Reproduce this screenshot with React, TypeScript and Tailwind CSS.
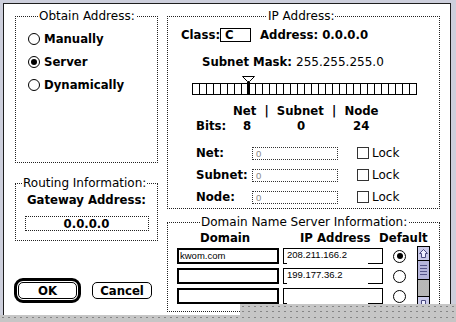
import React from "react";

const chicago = "font-['DejaVu_Sans_Condensed','DejaVu_Sans',sans-serif] font-bold text-[13px] leading-[14px] text-black";
const geneva = "font-['DejaVu_Sans',sans-serif] text-[12px] leading-[14px] text-black";
const small = "font-['Liberation_Sans',Arial,sans-serif] text-[9.5px] leading-[12px]";

const pattern =
  "bg-[#c6c6c6] bg-[radial-gradient(circle,#858585_0.9px,transparent_1.1px)] bg-[size:6px_5px]";

function GroupBox({
  label,
  labelClass,
  className,
  children,
}: {
  label: string;
  labelClass: string;
  className: string;
  children: React.ReactNode;
}) {
  return (
    <div className={`relative border border-dotted border-[#222] ${className}`}>
      <span className={`absolute -top-[8px] bg-white px-[1px] whitespace-nowrap ${geneva} ${labelClass}`}>
        {label}
      </span>
      {children}
    </div>
  );
}

function Radio({ on, size = 12 }: { on?: boolean; size?: number }) {
  return (
    <span
      className={`flex items-center justify-center rounded-full border border-black bg-white shrink-0 ${
        size === 12 ? "w-[12px] h-[12px]" : "w-[13px] h-[13px]"
      }`}
    >
      {on && <span className="w-[6px] h-[6px] rounded-full bg-black" />}
    </span>
  );
}

function Slider() {
  const cells = Array.from({ length: 31 }, (_, i) => (i + 1) * 7);
  return (
    <svg width="226" height="19" viewBox="0 0 226 19" className="block">
      <rect x="0.5" y="7.5" width="224" height="11" fill="white" stroke="black" />
      {cells.map((x) => (
        <line key={x} x1={x + 0.5} y1="7" x2={x + 0.5} y2="19" stroke="black" />
      ))}
      <rect x="55" y="6" width="3" height="13" fill="black" />
      <path d="M50.5 0.5 H62.5 L57.5 5.5 H55.5 Z" fill="white" stroke="black" />
    </svg>
  );
}

function Arrow({ down }: { down?: boolean }) {
  return (
    <svg width="11" height="11" viewBox="0 0 11 11" className={down ? "rotate-180" : ""}>
      <path
        d="M5.5 1.5 L9.5 5.5 H7.5 V9.5 H3.5 V5.5 H1.5 Z"
        fill="#eeeeff"
        stroke="#4a4a80"
        strokeLinejoin="miter"
      />
    </svg>
  );
}

function Scrollbar() {
  return (
    <div className="ml-[11px] w-[13px] h-[66px] border border-black flex flex-col">
      <div className="h-[14px] shrink-0 bg-[#cacaea] border-b border-black flex items-center justify-center">
        <Arrow />
      </div>
      <div className="h-[19px] shrink-0 bg-[#b6b6dc] border-b border-black flex flex-col items-center justify-center gap-[2px]">
        <span className="w-[7px] h-[1px] bg-[#55558a]" />
        <span className="w-[7px] h-[1px] bg-[#55558a]" />
        <span className="w-[7px] h-[1px] bg-[#55558a]" />
        <span className="w-[7px] h-[1px] bg-[#55558a]" />
      </div>
      <div className="h-[16px] shrink-0 bg-[#cfcfcf] bg-[radial-gradient(circle,#9a9a9a_0.6px,transparent_0.8px)] bg-[size:2px_2px]" />
      <div className="flex-1 bg-[#cacaea] border-t border-black flex items-center justify-center">
        <Arrow down />
      </div>
    </div>
  );
}

function IpField({ value }: { value: string }) {
  return (
    <div className="ml-[4px] w-[100px] h-[16px] flex flex-col border-t border-x border-black">
      <div className={`flex-1 pl-[3px] ${small} text-black`}>{value}</div>
      <div className="h-[1px] flex justify-between">
        <span className="w-[3px] bg-black" />
        <span className="w-[14px] bg-black" />
      </div>
    </div>
  );
}

const dnsRows = [
  { domain: "kwom.com", ip: "208.211.166.2", on: true },
  { domain: "", ip: "199.177.36.2", on: false },
  { domain: "", ip: "", on: false },
];

const bitRows = ["Net:", "Subnet:", "Node:"];

export default function App() {
  return (
    <div className="relative w-[456px] h-[322px] overflow-hidden bg-[#cdcfdc] pl-[3px] pt-[3px] pr-[5px]">
      <div className="h-[330px] border border-[#1e1e1e] bg-white flex pl-[11px] pt-[12px]">
        {/* Left column */}
        <div className="w-[143px] flex flex-col">
          <GroupBox label="Obtain Address:" labelClass="left-[22px]" className="h-[147px] pt-[10px] pl-[12px]">
            {[
              { t: "Manually", on: false },
              { t: "Server", on: true },
              { t: "Dynamically", on: false },
            ].map((r) => (
              <div key={r.t} className="h-[23px] flex items-center gap-[4px]">
                <Radio on={r.on} />
                <span className={chicago}>{r.t}</span>
              </div>
            ))}
          </GroupBox>

          <GroupBox
            label="Routing Information:"
            labelClass="left-[6px]"
            className="mt-[20px] h-[58px] pt-[9px] flex flex-col items-center"
          >
            <span className={chicago}>Gateway Address:</span>
            <div className="mt-[9px] w-[124px] h-[15px] border border-dotted border-[#222] flex items-center justify-center">
              <span className={chicago}>0.0.0.0</span>
            </div>
          </GroupBox>

          <div className="mt-[37px] -ml-[1px] flex items-center gap-[11px]">
            <div className="w-[67px] h-[25px] rounded-[9px] border-[3px] border-black p-[1px]">
              <div className="h-full rounded-[5px] border border-black flex items-center justify-center">
                <span className={chicago}>OK</span>
              </div>
            </div>
            <div className="w-[60px] h-[17px] rounded-[5px] border border-black flex items-center justify-center">
              <span className={chicago}>Cancel</span>
            </div>
          </div>
        </div>

        {/* Right column */}
        <div className="ml-[9px] w-[273px] flex flex-col">
          <GroupBox label="IP Address:" labelClass="left-[99px]" className="h-[193px]">
            <div className="mt-[11px] h-[14px] pl-[13px] flex items-center">
              <span className={`w-[39px] ${chicago}`}>Class:</span>
              <div className="w-[31px] h-[14px] border border-black flex items-center pl-[4px]">
                <span className={chicago}>C</span>
              </div>
              <span className={`ml-[9px] ${chicago}`}>Address: 0.0.0.0</span>
            </div>

            <div className="mt-[13px] h-[14px] pl-[34px] flex items-center">
              <span className={`w-[94px] ${chicago}`}>Subnet Mask:</span>
              <span className="font-['DejaVu_Sans',sans-serif] text-[12px] leading-[14px] text-black">255.255.255.0</span>
            </div>

            <div className="mt-[7px] pl-[24px]">
              <Slider />
            </div>

            <div className={`mt-[9px] h-[14px] pl-[65px] whitespace-pre ${chicago}`}>Net  |  Subnet  |  Node</div>

            <div className="mt-[1px] h-[14px] pl-[28px] flex">
              <span className={`w-[47px] ${chicago}`}>Bits:</span>
              <span className={`w-[54px] ${chicago}`}>8</span>
              <span className={`w-[56px] ${chicago}`}>0</span>
              <span className={chicago}>24</span>
            </div>

            <div className="mt-[9px] flex flex-col">
              {bitRows.map((l) => (
                <div key={l} className="h-[22px] pl-[28px] flex items-center">
                  <span className={`w-[56px] ${chicago}`}>{l}</span>
                  <div className={`w-[86px] h-[13px] border border-dotted border-[#333] pl-[3px] text-[#888] ${small} leading-[11px]`}>
                    0
                  </div>
                  <span className="ml-[19px] w-[12px] h-[12px] border border-[#333]" />
                  <span className={`ml-[3px] ${geneva} text-[#a6a6a6]`}>Lock</span>
                </div>
              ))}
            </div>
          </GroupBox>

          <GroupBox label="Domain Name Server Information:" labelClass="left-[32px]" className="mt-[13px] h-[90px]">
            <div className="mt-[8px] h-[14px] pl-[32px] flex">
              <span className={`w-[100px] ${chicago}`}>Domain</span>
              <span className={`w-[79px] ${chicago}`}>IP Address</span>
              <span className={chicago}>Default</span>
            </div>
            <div className="mt-[1px] pl-[9px] flex">
              <div className="pt-[2px] flex flex-col gap-[4px]">
                {dnsRows.map((r, i) => (
                  <div key={i} className="h-[16px] flex items-center">
                    <div className={`w-[102px] h-[16px] border-2 border-black pl-[1px] ${small} leading-[12px] text-black`}>
                      {r.domain}
                    </div>
                    <IpField value={r.ip} />
                    <span className="ml-[10px]">
                      <Radio on={r.on} size={13} />
                    </span>
                  </div>
                ))}
              </div>
              <Scrollbar />
            </div>
          </GroupBox>
        </div>
      </div>

      {/* desktop pattern showing below the window */}
      <div className={`absolute left-[240px] top-[304px] right-0 bottom-0 ${pattern}`} />
      <div className={`absolute left-0 top-[315px] right-0 bottom-0 ${pattern}`} />
    </div>
  );
}
